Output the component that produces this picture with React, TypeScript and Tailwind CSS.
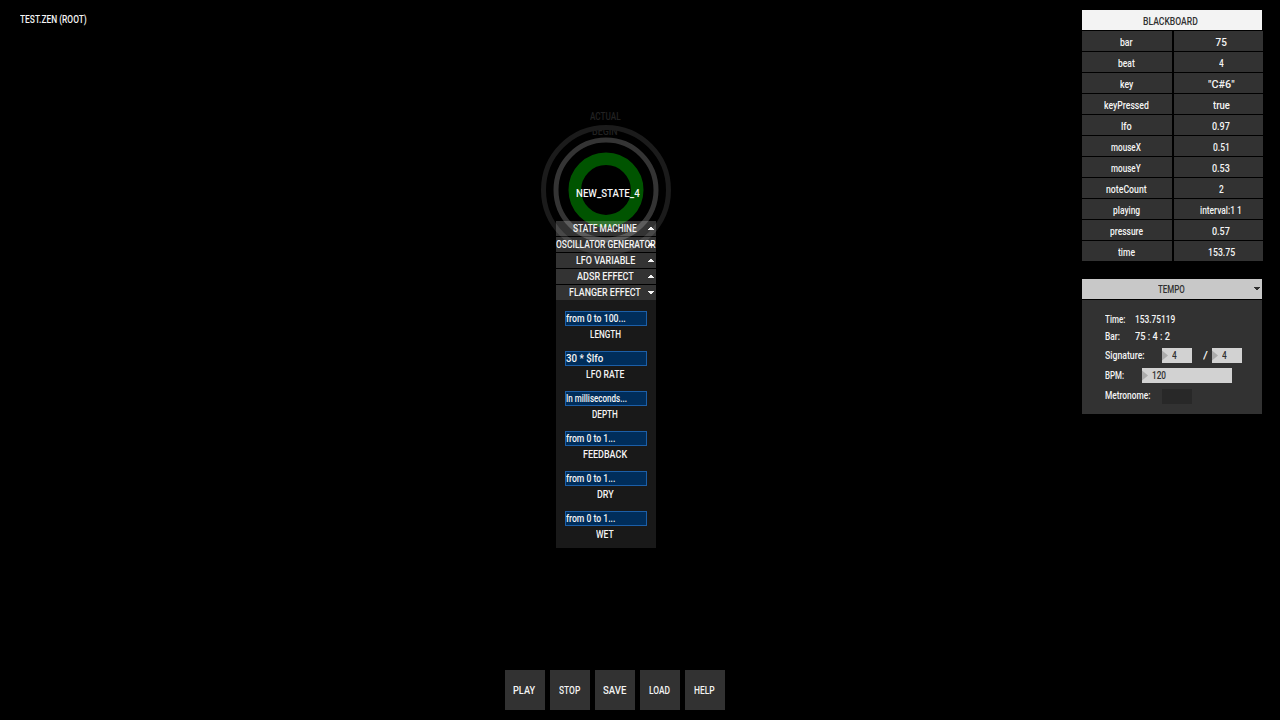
import { useLayoutEffect, useRef, useState } from "react";

type FitProps = { text: string; w: number; className?: string };

/* One line of small UI text, condensed so that it fills the given width. */
function Fit({ text, w, className = "" }: FitProps) {
  const ref = useRef<HTMLSpanElement>(null);
  const [scale, setScale] = useState(1);
  useLayoutEffect(() => {
    if (ref.current) setScale(w / ref.current.offsetWidth);
  }, [text, w]);
  return (
    <span className={`inline-flex shrink-0 justify-start ${className}`} style={{ width: w }}>
      <span
        ref={ref}
        className="inline-block shrink-0 origin-left whitespace-pre"
        style={{ transform: `scaleX(${scale})` }}
      >
        {text}
      </span>
    </span>
  );
}

const variables: [string, number, string, number][] = [
  ["bar", 13, "75", 11],
  ["beat", 17, "4", 5],
  ["key", 13, '"C#6"', 27],
  ["keyPressed", 45, "true", 17],
  ["lfo", 11, "0.97", 18],
  ["mouseX", 30, "0.51", 17],
  ["mouseY", 30, "0.53", 18],
  ["noteCount", 41, "2", 5],
  ["playing", 27, "interval:1 1", 42],
  ["pressure", 33, "0.57", 18],
  ["time", 17, "153.75", 27],
];

const sections: [string, number, boolean][] = [
  ["STATE MACHINE", 64, false],
  ["OSCILLATOR GENERATOR", 100, false],
  ["LFO VARIABLE", 59, false],
  ["ADSR EFFECT", 57, false],
  ["FLANGER EFFECT", 72, true],
];

const fields: [string, number, string, number][] = [
  ["from 0 to 100...", 60, "LENGTH", 31],
  ["30 * $lfo", 37, "LFO RATE", 38],
  ["In milliseconds...", 61, "DEPTH", 26],
  ["from 0 to 1...", 49, "FEEDBACK", 44],
  ["from 0 to 1...", 49, "DRY", 17],
  ["from 0 to 1...", 49, "WET", 18],
];

const buttons: [string, number][] = [
  ["PLAY", 22],
  ["STOP", 21],
  ["SAVE", 23],
  ["LOAD", 21],
  ["HELP", 21],
];

function Arrow({ down = false, className = "" }: { down?: boolean; className?: string }) {
  return (
    <svg width="6" height="3" viewBox="0 0 6 3" className={className} shapeRendering="crispEdges">
      <path d={down ? "M0 0H6V1H5V2H4V3H2V2H1V1H0Z" : "M0 3H6V2H5V1H4V0H2V1H1V2H0Z"} fill="currentColor" />
    </svg>
  );
}

function NumberBox({ value, w, className }: { value: string; w: number; className: string }) {
  return (
    <div className={`flex h-[15px] shrink-0 items-center bg-[#d2d2d2] text-[#303030] ${className}`}>
      <svg width="6" height="15" viewBox="0 0 6 15" className="mr-[3.5px] shrink-0">
        <path d="M0 2.5L6 7.5L0 12.5Z" fill="#aaaaaa" />
      </svg>
      <Fit text={value} w={w} />
    </div>
  );
}

function StateNode() {
  return (
    <div className="absolute left-[541px] top-[110px] w-[130px]">
      <div className="flex flex-col items-center pr-[2px] text-[#222222]">
        <Fit text="ACTUAL" w={31} className="h-[15px]" />
        <Fit text="BEGIN" w={26} className="h-[15px]" />
      </div>
      <svg width="130" height="130" viewBox="0 0 130 130" className="absolute left-0 top-[15px]" fill="none">
        <circle cx="65" cy="65" r="62.5" stroke="#1b1b1b" strokeWidth="5" />
        <circle cx="65" cy="65" r="50" stroke="#343434" strokeWidth="5" />
        <circle cx="65" cy="65" r="31.2" stroke="#005400" strokeWidth="12.6" />
      </svg>
      <div className="relative flex justify-center pl-[4px] pt-[47px]">
        <Fit text="NEW_STATE_4" w={64} />
      </div>
      <div className="absolute left-[15px] top-[111px] w-[100px]">
        <div className="flex flex-col gap-px">
          {sections.map(([name, w, open]) => (
            <div key={name} className="relative flex h-[15px] items-center justify-center bg-white/20">
              <Fit text={name} w={w} className={w > 90 ? "" : "mr-[2px]"} />
              <Arrow down={open} className="absolute right-[2px] top-[6px]" />
            </div>
          ))}
        </div>
        <div className="flex h-[248px] flex-col items-center bg-[#191919] pt-[11px]">
          {fields.map(([hint, hw, label, lw]) => (
            <div key={label} className="flex h-[40px] shrink-0 flex-col items-center">
              <div className="flex h-[15px] w-[82px] shrink-0 items-center border border-[#1c5fa8] bg-[#002d5a]">
                <Fit text={hint} w={hw} />
              </div>
              <Fit text={label} w={lw} className="mr-[2px] mt-[2px]" />
            </div>
          ))}
        </div>
      </div>
    </div>
  );
}

function Blackboard() {
  return (
    <section className="w-[181px]">
      <div className="mb-px flex h-5 w-[180px] items-center justify-center bg-[#f3f3f3] pr-[3px] pt-[3px] text-[#303030]">
        <Fit text="BLACKBOARD" w={55} />
      </div>
      <div className="flex flex-col gap-px">
        {variables.map(([name, nw, value, vw]) => (
          <div key={name} className="flex h-5 gap-[2px]">
            <div className="flex w-[90px] items-center justify-center bg-[#323232] pr-[2px] pt-[3px]">
              <Fit text={name} w={nw} />
            </div>
            <div className="flex flex-1 items-center justify-center bg-[#323232] pl-[5px] pt-[3px]">
              <Fit text={value} w={vw} />
            </div>
          </div>
        ))}
      </div>
    </section>
  );
}

function Tempo() {
  return (
    <section className="w-[180px]">
      <div className="relative flex h-5 items-center justify-center bg-[#c8c8c8] pr-[2px] text-[#303030]">
        <Fit text="TEMPO" w={27} className="relative top-px" />
        <Arrow down className="absolute right-[2px] top-[8px]" />
      </div>
      <div className="mt-px flex h-[114px] flex-col bg-[#323232] pl-[23px] pt-[11px]">
        <div className="flex h-[17px] items-center">
          <Fit text="Time:" w={20} className="mr-[10px]" />
          <Fit text="153.75119" w={40} />
        </div>
        <div className="flex h-[17px] items-center">
          <Fit text="Bar:" w={15} className="mr-[15px]" />
          <Fit text="75 : 4 : 2" w={35} />
        </div>
        <div className="mt-[3px] flex h-[15px] items-center">
          <Fit text="Signature:" w={40} className="mr-[17px]" />
          <NumberBox value="4" w={5} className="w-[30px]" />
          <Fit text="/" w={5} className="ml-[11px] mr-[4px]" />
          <NumberBox value="4" w={5} className="w-[30px]" />
        </div>
        <div className="mt-[5px] flex h-[15px] items-center">
          <Fit text="BPM:" w={19} className="mr-[18px]" />
          <NumberBox value="120" w={14} className="w-[90px]" />
        </div>
        <div className="mt-[6px] flex h-[15px] items-center">
          <Fit text="Metronome:" w={45} className="mb-px mr-[12px]" />
          <div className="h-[15px] w-[30px] bg-[#282828]" />
        </div>
      </div>
    </section>
  );
}

export default function App() {
  return (
    <main className="relative flex h-[720px] w-[1280px] flex-col justify-between overflow-hidden bg-black font-['Roboto','Liberation_Sans',sans-serif] text-[10px] font-medium leading-[14px] text-[#f5f5f5]">
      <div className="flex justify-between">
        <div className="pl-[20px] pt-[13px]">
          <Fit text="TEST.ZEN (ROOT)" w={67} />
        </div>
        <aside className="mr-[17px] mt-[10px] flex flex-col gap-[18px]">
          <Blackboard />
          <Tempo />
        </aside>
      </div>
      <StateNode />
      <nav className="mb-[10px] ml-[505px] flex gap-[5px]">
        {buttons.map(([label, w]) => (
          <button key={label} className="flex size-10 items-center justify-center bg-[#323232] pr-[2px] pt-px">
            <Fit text={label} w={w} />
          </button>
        ))}
      </nav>
    </main>
  );
}
